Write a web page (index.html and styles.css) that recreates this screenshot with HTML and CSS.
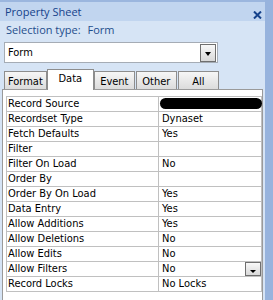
FILE: index.html
```html
<!DOCTYPE html>
<html lang="en">
<head>
  <meta charset="UTF-8" />
  <title>Property Sheet</title>
  <link rel="stylesheet" href="styles.css">
</head>
<body>

  <div class="sheet">
    <div class="title-bar">
      <span class="title">Property Sheet</span>
      <svg class="close" width="9" height="8" viewBox="0 0 9 8">
        <path d="M1 0.5 L8 7.5 M8 0.5 L1 7.5" stroke="#15428b" stroke-width="2" fill="none"/>
      </svg>
    </div>

    <div class="selection">Selection type:<span class="selection-value">Form</span></div>

    <div class="combo">
      <span class="combo-text">Form</span>
      <span class="drop-btn"></span>
    </div>

    <div class="tabs">
      <div class="tab">Format</div>
      <div class="tab active">Data</div>
      <div class="tab">Event</div>
      <div class="tab">Other</div>
      <div class="tab">All</div>
    </div>

    <div class="panel">
      <div class="props">
        <div class="prop-row">
          <div class="prop-label">Record Source</div>
          <div class="prop-value"><span class="redacted"></span></div>
        </div>
        <div class="prop-row">
          <div class="prop-label">Recordset Type</div>
          <div class="prop-value">Dynaset</div>
        </div>
        <div class="prop-row">
          <div class="prop-label">Fetch Defaults</div>
          <div class="prop-value">Yes</div>
        </div>
        <div class="prop-row">
          <div class="prop-label">Filter</div>
          <div class="prop-value"></div>
        </div>
        <div class="prop-row">
          <div class="prop-label">Filter On Load</div>
          <div class="prop-value">No</div>
        </div>
        <div class="prop-row">
          <div class="prop-label">Order By</div>
          <div class="prop-value"></div>
        </div>
        <div class="prop-row">
          <div class="prop-label">Order By On Load</div>
          <div class="prop-value">Yes</div>
        </div>
        <div class="prop-row">
          <div class="prop-label">Data Entry</div>
          <div class="prop-value">Yes</div>
        </div>
        <div class="prop-row">
          <div class="prop-label">Allow Additions</div>
          <div class="prop-value">Yes</div>
        </div>
        <div class="prop-row">
          <div class="prop-label">Allow Deletions</div>
          <div class="prop-value">No</div>
        </div>
        <div class="prop-row">
          <div class="prop-label">Allow Edits</div>
          <div class="prop-value">No</div>
        </div>
        <div class="prop-row">
          <div class="prop-label">Allow Filters</div>
          <div class="prop-value has-btn">No<span class="drop-btn small"></span></div>
        </div>
        <div class="prop-row">
          <div class="prop-label">Record Locks</div>
          <div class="prop-value">No Locks</div>
        </div>
      </div>
    </div>
  </div>

</body>
</html>
```

FILE: styles.css
```css
:root {
  --pane-bg: #d6e4f5;
  --title-bg: #c1d5ef;
  --frame: #97b3dd;
  --title-text: #15428b;
  --grid-line: #c0c0c0;
  --panel-line: #9a9a9a;
}

* {
  box-sizing: border-box;
  margin: 0;
  padding: 0;
}

html, body {
  width: 273px;
  height: 300px;
  overflow: hidden;
}

body {
  background: var(--frame);
  font-family: "DejaVu Sans Condensed", "Liberation Sans", sans-serif;
  font-size: 11px;
  color: #000;
}

.sheet {
  width: 265px;
  height: 300px;
  background: var(--pane-bg);
  border-top: 2px solid #9bb6de;
}

.title-bar {
  display: flex;
  justify-content: space-between;
  align-items: flex-start;
  height: 19px;
  padding: 0 3px 0 5px;
  background: var(--title-bg);
  font-family: "Open Sans", sans-serif;
  line-height: 19px;
  color: var(--title-text);
}

.close {
  margin-top: 9px;
}

.selection {
  height: 18px;
  line-height: 18px;
  padding-left: 6px;
  font-family: "Open Sans", sans-serif;
  color: #1e4e8c;
}

.selection-value {
  margin-left: 7px;
}

.combo {
  display: flex;
  justify-content: space-between;
  align-items: flex-start;
  width: 214px;
  height: 21px;
  margin: 3px 0 0 4px;
  padding: 0 1px 0 3px;
  border: 1px solid #a5acb5;
  background: #fff;
  line-height: 19px;
}

.drop-btn {
  display: flex;
  justify-content: center;
  align-items: center;
  width: 16px;
  height: 18px;
  margin-top: 1px;
  border: 1px solid #6f6f6f;
  background: linear-gradient(#f8f8f8, #d9d9d9);
}

.drop-btn::after {
  content: "";
  margin-top: 2px;
  border-left: 3.5px solid transparent;
  border-right: 3.5px solid transparent;
  border-top: 4px solid #000;
}

.drop-btn.small {
  height: 14px;
  margin-top: 0;
}

.drop-btn.small::after {
  margin-top: 4px;
  border-top-width: 3px;
}

.tabs {
  display: flex;
  align-items: flex-end;
  height: 21px;
  margin: 6px 0 -1px 4px;
  position: relative;
  z-index: 1;
}

.tab {
  min-width: 41px;
  height: 18px;
  margin: 0 1px 1px 0;
  padding: 3px 3px 0;
  border: 1px solid #8d8d8d;
  border-bottom: none;
  background: linear-gradient(#f6f6f6, #dcdcdc);
  text-align: center;
  line-height: 14px;
}

.tab.active {
  width: 47px;
  height: 21px;
  margin: 0 0 0 -1px;
  padding-top: 2px;
  background: #fff;
}

.panel {
  width: 261px;
  height: 211px;
  margin-left: 2px;
  padding: 6px 0 0 3px;
  border: 1px solid var(--panel-line);
  border-bottom: none;
  background: #fff;
}

.props {
  width: 256px;
  border: 1px solid var(--grid-line);
  border-bottom: none;
}

.prop-row {
  display: grid;
  grid-template-columns: 152px 1fr;
  height: 15px;
  border-bottom: 1px solid var(--grid-line);
  line-height: 14px;
}

.prop-label {
  padding-left: 1px;
  border-right: 1px solid var(--grid-line);
  white-space: nowrap;
}

.prop-value {
  padding-left: 3px;
}

.prop-value.has-btn {
  display: flex;
  justify-content: space-between;
}

.redacted {
  display: block;
  height: 11px;
  margin: 1px -1px 0 -2px;
  border-radius: 6px;
  background: #000;
}
```
